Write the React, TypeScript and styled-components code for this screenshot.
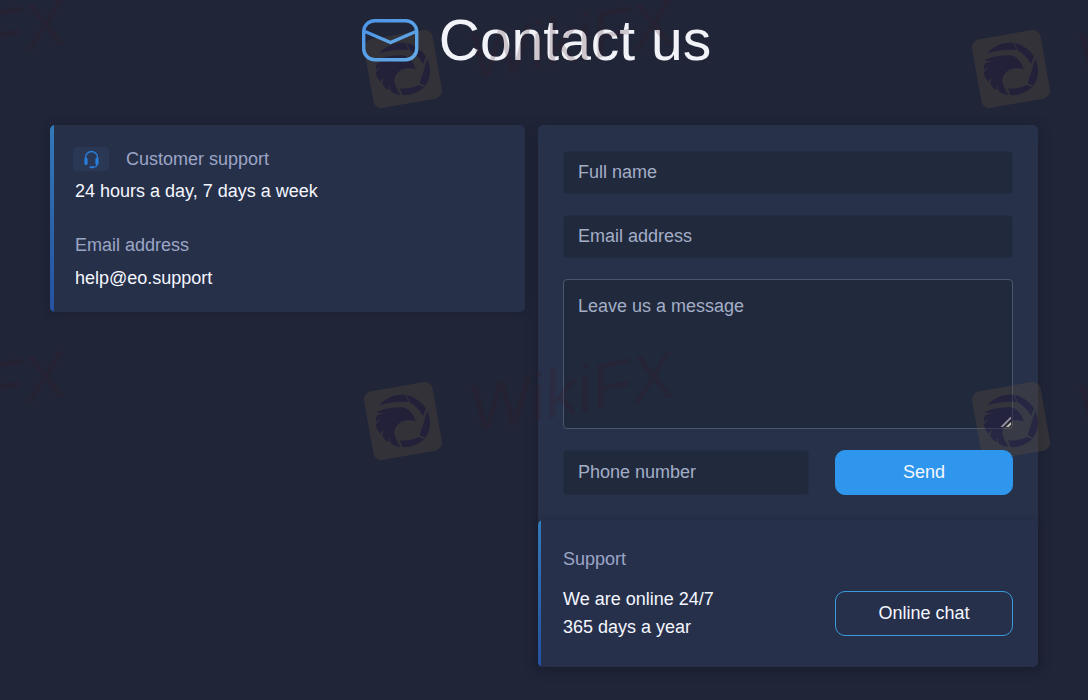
import React from "react";
import styled, { createGlobalStyle } from "styled-components";

const GlobalStyle = createGlobalStyle`
  *, *::before, *::after { box-sizing: border-box; }
  html { background: #202538; color-scheme: dark; }
  body {
    margin: 0;
    color: #f4f7ff;
    font-family: "Liberation Sans", Arial, sans-serif;
    font-size: 18px;
  }
`;

const Page = styled.div`
  position: relative;
  min-height: 100vh;
  overflow: hidden;
  background: #202538;
`;

const Header = styled.header`
  display: flex;
  justify-content: center;
  align-items: center;
  gap: 20px;
  height: 80px;
  padding-right: 16px;
`;

const HeaderIcon = styled.svg`
  position: relative;
  z-index: 1;
`;

const Title = styled.h1`
  margin: 0;
  font-size: 57px;
  line-height: 80px;
  font-weight: 400;
  color: #f2f3f8;
`;

const Columns = styled.main`
  display: grid;
  grid-template-columns: 19fr 20fr;
  gap: 13px;
  align-items: start;
  padding: 45px 50px 33px;
`;

const AccentCard = styled.section<{ $tone: string }>`
  position: relative;
  overflow: hidden;
  border-radius: 5px;
  background: ${(p) => p.$tone};

  &::before {
    content: "";
    position: absolute;
    inset: 0 auto 0 0;
    width: 4px;
    background: linear-gradient(#3379b8, #2551a0);
  }
`;

const InfoCard = styled(AccentCard)`
  display: grid;
  gap: 22px;
  padding: 18px 25px 17px;
  box-shadow: 0 0 10px rgba(20, 24, 38, 0.4);
`;

const Line = styled.p<{ $muted?: boolean; $height?: number }>`
  display: flex;
  align-items: center;
  gap: 17px;
  margin: 0;
  line-height: ${(p) => p.$height ?? 32}px;
  color: ${(p) => (p.$muted ? "#9ba6c6" : "#f4f7ff")};
`;

const MailLink = styled.a`
  color: inherit;
  text-decoration: none;
`;

const IconTile = styled.span`
  display: flex;
  justify-content: center;
  align-items: center;
  width: 36px;
  height: 24px;
  margin-left: -2px;
  border-radius: 4px;
  background: #2a3755;
`;

const Panel = styled.div`
  border-radius: 5px;
  background: #273149;
  box-shadow: 0 2px 12px rgba(20, 24, 38, 0.5);
`;

const Form = styled.form`
  display: grid;
  gap: 21px;
  padding: 26px 25px 25px;
`;

const Field = styled.input`
  width: 100%;
  min-width: 0;
  height: ${(p) => (p.type === "tel" ? 45 : 43)}px;
  padding: 0 14px 1px;
  border: 1px solid #232c41;
  border-radius: 4px;
  background: #21293d;
  color: #f4f7ff;
  font: inherit;
  outline: none;

  &::placeholder { color: #a3aec6; opacity: 1; }
`;

const Message = styled.textarea`
  display: block;
  width: 100%;
  height: 150px;
  padding: 16px 14px;
  border: 1px solid #49566b;
  border-radius: 4px;
  background: #21293d;
  color: #f4f7ff;
  font: inherit;
  line-height: 21px;
  outline: none;
  resize: vertical;

  &::placeholder { color: #a3aec6; opacity: 1; }

  &::-webkit-resizer {
    background: linear-gradient(
        135deg,
        transparent 5px,
        #111624 6px,
        #e8eaf0 7px,
        #e8eaf0 8px,
        #111624 9px,
        #111624 10px,
        #e8eaf0 11px,
        #e8eaf0 12px,
        #111624 13px
      )
      right 1px bottom 1px / 10px 10px no-repeat;
  }
`;

const ActionRow = styled.div`
  display: grid;
  grid-template-columns: 1fr 178px;
  gap: 26px;
  align-items: center;
`;

const Button = styled.button<{ $outline?: boolean }>`
  position: relative;
  z-index: 1;
  height: 45px;
  padding: 0;
  border: 1px solid ${(p) => (p.$outline ? "#3a9bdc" : "#2f96ee")};
  border-radius: 10px;
  background: ${(p) => (p.$outline ? "transparent" : "#2f96ee")};
  color: #f4f7ff;
  font: inherit;
  cursor: pointer;
`;

const SupportCard = styled(AccentCard)`
  padding: 24px 25px 26px;
  box-shadow: 0 0 6px rgba(20, 24, 38, 0.3);

  &::before { width: 3px; }
`;

const SupportRow = styled(ActionRow)`
  margin-top: 11px;
`;

const Marks = styled.div`
  position: absolute;
  inset: 0;
  display: grid;
  grid-template-columns: repeat(3, 608px);
  grid-auto-rows: 352px;
  padding-top: 34px;
  margin-left: -240px;
  overflow: hidden;
  pointer-events: none;
`;

const Mark = styled.div`
  display: flex;
  align-items: center;
  gap: 32px;
  height: 70px;
  transform: rotate(-10deg);
  transform-origin: 35px 35px;
`;

const MarkName = styled.span`
  color: rgba(58, 24, 36, 0.2);
  font-size: 66px;
  line-height: 66px;
  font-style: italic;
`;

function Envelope() {
  return (
    <HeaderIcon width="58" height="44" viewBox="0 0 58 44" fill="none" aria-hidden="true">
      <defs>
        <linearGradient id="envelope" x1="0" y1="0" x2="1" y2="1">
          <stop offset="0" stopColor="#4d95e8" />
          <stop offset="1" stopColor="#64abe6" />
        </linearGradient>
      </defs>
      <g stroke="url(#envelope)" strokeWidth="3.4" strokeLinejoin="round">
        <rect x="2.7" y="2.7" width="53" height="39" rx="11" />
        <path d="M4 13.500 L29.500 24.500 L55 13.500" />
      </g>
    </HeaderIcon>
  );
}

function Headset() {
  return (
    <svg width="17" height="19" viewBox="0 0 17 19" fill="none" stroke="#287fdb" aria-hidden="true">
      <path d="M2.500 9V7.500a6 6 0 0 1 12 0V9" strokeWidth="1.300" />
      <path d="M3 9v4.500M14 9v4.500" strokeWidth="3.200" strokeLinecap="round" />
      <path d="M14 14.500c0 2-1.500 2.700-4 2.700" strokeWidth="1.200" />
      <path d="M7.500 17.200h2.500" strokeWidth="2" strokeLinecap="round" />
    </svg>
  );
}

const eagleShapes = [
  "M60 92Q88 57 137 60L147 82Q105 78 60 92Z",
  "M141 60Q180 72 199 101L190 124Q178 100 150 83Z",
  "M203 108Q222 155 196 190L180 181Z",
  "M194 193Q165 220 128 217L121 197Q155 199 178 187Z",
  "M50 113Q82 96 132 98Q160 108 168 141Q150 132 132 139Q105 148 104 174Q107 194 123 217Q106 215 94 207L86 187L87 203Q75 196 67 184L73 164L61 177Q50 164 48 150L62 133L48 141Q48 129 52 121L72 117Z",
];

function Eagle() {
  return (
    <svg width="70" height="70" viewBox="0 0 70 70" aria-hidden="true">
      <defs>
        <g id="eagle-shape" transform="rotate(10 35 35) translate(-8.300 -11.300) scale(0.3333)">
          {eagleShapes.map((d) => (
            <path key={d} d={d} />
          ))}
        </g>
        <mask id="eagle-cut">
          <rect width="70" height="70" fill="#fff" />
          <use href="#eagle-shape" fill="#000" />
        </mask>
      </defs>
      <use href="#eagle-shape" fill="rgba(40, 28, 62, 0.45)" />
      <rect width="70" height="70" rx="9" fill="rgba(96, 82, 60, 0.3)" mask="url(#eagle-cut)" />
    </svg>
  );
}

export default function App() {
  return (
    <Page>
      <GlobalStyle />
      <Header>
        <Envelope />
        <Title>Contact us</Title>
      </Header>
      <Columns>
        <InfoCard $tone="#273049">
          <div>
            <Line $muted>
              <IconTile><Headset /></IconTile>
              Customer support
            </Line>
            <Line>24 hours a day, 7 days a week</Line>
          </div>
          <div>
            <Line $muted>Email address</Line>
            <Line $height={34}>
              <MailLink href="mailto:help@eo.support">help@eo.support</MailLink>
            </Line>
          </div>
        </InfoCard>
        <Panel>
          <Form onSubmit={(e) => e.preventDefault()}>
            <Field type="text" placeholder="Full name" aria-label="Full name" />
            <Field type="email" placeholder="Email address" aria-label="Email address" />
            <Message placeholder="Leave us a message" aria-label="Leave us a message" />
            <ActionRow>
              <Field type="tel" placeholder="Phone number" aria-label="Phone number" />
              <Button type="submit">Send</Button>
            </ActionRow>
          </Form>
          <SupportCard $tone="#27304b">
            <Line $muted $height={30}>Support</Line>
            <SupportRow>
              <div>
                <Line $height={28}>We are online 24/7</Line>
                <Line $height={28}>365 days a year</Line>
              </div>
              <Button type="button" $outline>Online chat</Button>
            </SupportRow>
          </SupportCard>
        </Panel>
      </Columns>
      <Marks aria-hidden="true">
        {Array.from({ length: 6 }, (_, i) => (
          <Mark key={i}>
            <Eagle />
            <MarkName>WikiFX</MarkName>
          </Mark>
        ))}
      </Marks>
    </Page>
  );
}
